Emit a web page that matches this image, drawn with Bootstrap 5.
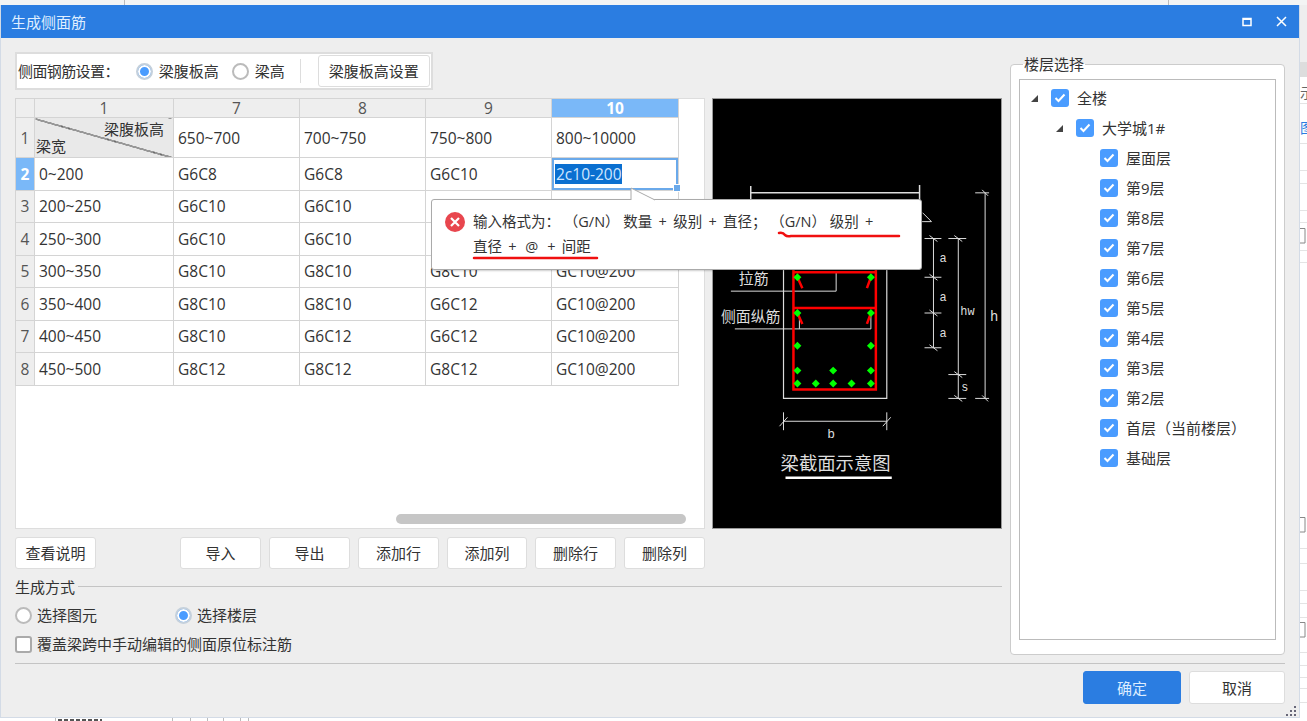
<!DOCTYPE html>
<html lang="zh">
<head>
    <meta charset="UTF-8">
    <title>生成侧面筋</title>
    <link href="https://cdn.jsdelivr.net/npm/bootstrap@5.3.0/dist/css/bootstrap.min.css" rel="stylesheet">
    <style>
        html, body { height: 721px; overflow: hidden; }
        body {
            background: #fff;
            color: #333;
            font-family: "Open Sans", "Noto Sans CJK SC", sans-serif;
            font-size: 15px;
            line-height: 20px;
        }
        /* application behind the dialog */
        .app-top { height: 5px; background: #f3f4f4; }
        .app-line { width: 1px; height: 5px; background: #bbb; }
        .app-main { height: 713px; }
        .app-side { width: 7px; background: #fff; overflow: hidden; display: block; }
        .app-side text { font-family: "Noto Sans CJK SC", sans-serif; font-size: 14px; }
        .app-bottom { height: 3px; background: #fff; display: block; }

        .dlg { width: 1300px; background: #eee; border: 1px solid #d3dbe6; border-width: 0 1px 1px 1px; }
        .dlg-title { height: 33px; background: #2b7de1; color: #dfeeff; padding: 0 12px 0 10px; }
        .dlg-body { padding: 14px 13px 0 14px; gap: 8px; }
        .left-col { width: 987px; }
        .settings { width: 418px; height: 38px; background: #fff; border: 2px solid #ddd; padding: 0 1px; }
        .lbl-main { margin-right: 17px; letter-spacing: -.6px; }
        .vsep { width: 1px; height: 24px; background: #ddd; margin: 0 17px 0 15px; }
        .ui-btn {
            background: #fff;
            border: 1px solid #ddd;
            border-radius: 3px;
            color: #333;
            font-size: 15px;
            line-height: 20px;
            padding: 0;
            height: 32px;
        }
        .btn-set { width: 112px; }
        .btn-act { width: 81px; }
        .btn-act-s { width: 80px; }
        .btn-primary-ui { width: 98px; height: 33px; background: #2b7de1; border-color: #2b7de1; color: #dcecff; }
        .btn-cancel-ui { width: 96px; height: 33px; }

        .ui-radio { width: 17px; height: 17px; border-radius: 50%; border: 2px solid #bbb; background: #fff; flex: none; }
        .ui-radio.on { box-shadow: inset 0 0 0 2px #fff; background: #4a9cff; border-color: #c4d0dc; }
        .ui-box { width: 17px; height: 17px; border: 2px solid #aaa; border-radius: 3px; background: #fff; flex: none; }

        .panes { margin-top: 8px; gap: 7px; height: 431px; }
        .grid-wrap { width: 690px; flex: none; background: #fff; border: 1px solid #ddd; }
        .sheet { table-layout: fixed; width: 664px; border-collapse: collapse; margin: -1px 0 0 -1px; }
        .sheet td, .sheet th {
            border: 1px solid #d4d4d4;
            padding: 0 0 0 4px;
            font-weight: 400;
            font-size: 15.500px;
            color: #333;
            overflow: hidden;
            white-space: nowrap;
        }
        .sheet thead th { height: 19px; background: #eee; text-align: center; padding: 0; line-height: 18px; color: #555; }
        .sheet tbody th { background: #eee; text-align: center; padding: 0; color: #555; }
        .row-1 td, .row-1 th { height: 40px; }
        .row-n td, .row-n th { height: 32.5px; }
        .sheet .hl { background: #7ab8f8; color: #fff; font-weight: 700; }
        .sheet .corner {
            background: linear-gradient(to top right, #e9e9e9 calc(50% - 1px), #444 calc(50% - 1px), #444 calc(50% + 0px), #e9e9e9 calc(50% + 0px));
            padding: 0;
            font-size: 15px;
        }
        .corner-in { height: 39px; line-height: 16px; padding: 3px 9px 3px 1px; }
        .sheet .cell-edit { position: relative; box-shadow: inset 0 0 0 2px #6aa9ea; padding-left: 3px; overflow: visible; }
        .sel-text { background: #0a6fd0; color: #cfe6ff; padding: 0 0 0 1px; display: inline-block; line-height: 20px; }
        .grip-dot { position: absolute; right: -3px; bottom: -2px; width: 6px; height: 6px; background: #6aa9ea; border: 1px solid #fff; box-sizing: content-box; }
        .thumb { width: 290px; height: 10px; margin: 0 0 4px 380px; background: #c6c6c6; border-radius: 5px; }

        .pic { width: 290px; height: 431px; flex: none; background: #000; border: 1px solid #999; display: block; }
        .pic text { fill: #ddd; font-family: "Noto Sans CJK SC", sans-serif; }
        .pic .cad { font-family: "Liberation Mono", monospace; }

        .tip {
            position: absolute;
            left: 431px;
            top: 199px;
            width: 491px;
            height: 71px;
            background: #fff;
            border: 1px solid #aaa;
            border-radius: 3px;
            padding: 9px 6px 0 41px;
            font-size: 14.500px;
            line-height: 25px;
            color: #333;
            box-shadow: 1px 1px 2px rgba(0,0,0,.2);
            z-index: 5;
        }
        .tip-arrow { position: absolute; left: 198px; top: -13px; }
        .tip-icon { position: absolute; left: 13px; top: 12px; }
        .tip-ink { position: absolute; left: 0; top: 0; pointer-events: none; }
        .sym { margin: 0 2.500px; }

        .btn-row { margin-top: 8px; width: 690px; }
        .btn-gap { gap: 8px; }
        .gen-head { margin-top: 8px; line-height: 20px; }
        .gen-line { flex: 1; height: 1px; background: #c4c4c4; margin: 0 0 2px 3px; }
        .gen-opt { margin-top: 8px; height: 20px; }
        .gen-opt2 { margin-top: 9px; height: 20px; }
        .opt-a { width: 160px; }
        .lbl-gap { gap: 5px; }

        .floors { width: 275px; height: 591px; margin-top: 12px; background: #fff; border: 1px solid #ccc; border-radius: 4px; padding: 14px 8px; position: relative; }
        .floors-legend { position: absolute; left: 12px; top: -11px; padding: 0 1px; line-height: 20px; background: linear-gradient(#eee 50%, #fff 50%); }
        .tree { height: 561px; border: 1px solid #bbb; margin: 0; padding: 3px 0 0; list-style: none; }
        .tree li { height: 30px; }
        .lv0 { padding-left: 10px; }
        .lv1 { padding-left: 35px; }
        .lv2 { padding-left: 80px; }
        .tw { width: 9px; margin-right: 12px; flex: none; }
        .ui-check { width: 18px; height: 18px; background: #4a9cff; border-radius: 3px; margin-right: 8px; flex: none; }

        .dlg-foot { margin: 8px 14px 0 14px; border-top: 1px solid #c4c4c4; padding-top: 7px; gap: 8px; position: relative; }
        .resize-grip { position: absolute; right: -12px; bottom: -13px; }
    </style>
</head>
<body>
    <div class="app-top d-flex">
        <div style="width:124px"></div><div class="app-line"></div>
        <div style="width:1043px"></div><div class="app-line"></div>
    </div>
    <div class="app-main d-flex">
        <div class="dlg d-flex flex-column">
            <div class="dlg-title d-flex align-items-center justify-content-between">
                <span>生成侧面筋</span>
                <div class="d-flex align-items-center" style="gap:24px">
                    <svg width="10" height="10" viewBox="0 0 10 10"><rect x="1" y="1.500" width="8" height="7" fill="none" stroke="#fff" stroke-width="1.500"/><path d="M1 2h8" stroke="#fff" stroke-width="2"/></svg>
                    <svg width="11" height="11" viewBox="0 0 11 11"><path d="M1 1l9 9M10 1l-9 9" stroke="#fff" stroke-width="1.500"/></svg>
                </div>
            </div>
            <div class="dlg-body d-flex">
                <div class="left-col">
                    <div class="settings d-flex align-items-center">
                        <span class="lbl-main">侧面钢筋设置：</span>
                        <span class="ui-radio on"></span><span class="ms-1" style="margin-right:13px;padding-left:2px">梁腹板高</span>
                        <span class="ui-radio"></span><span class="ms-1" style="padding-left:2px">梁高</span>
                        <span class="vsep"></span>
                        <button class="ui-btn btn-set">梁腹板高设置</button>
                    </div>
                    <div class="panes d-flex">
                        <div class="grid-wrap d-flex flex-column justify-content-between">
                            <table class="sheet">
                                <colgroup><col style="width:19px"><col style="width:139px"><col style="width:126px"><col style="width:126px"><col style="width:126px"><col style="width:127px"></colgroup>
                                <thead>
                                    <tr><th></th><th>1</th><th>7</th><th>8</th><th>9</th><th class="hl">10</th></tr>
                                </thead>
                                <tbody>
                                    <tr class="row-1"><th>1</th>
                                        <td class="corner"><div class="corner-in d-flex flex-column justify-content-between"><span class="align-self-end">梁腹板高</span><span>梁宽</span></div></td>
                                        <td>650~700</td><td>700~750</td><td>750~800</td><td>800~10000</td></tr>
                                    <tr class="row-n"><th class="hl">2</th><td>0~200</td><td>G6C8</td><td>G6C8</td><td>G6C10</td>
                                        <td class="cell-edit"><span class="sel-text">2c10-200</span><span class="grip-dot"></span></td></tr>
                                    <tr class="row-n"><th>3</th><td>200~250</td><td>G6C10</td><td>G6C10</td><td></td><td></td></tr>
                                    <tr class="row-n"><th>4</th><td>250~300</td><td>G6C10</td><td>G6C10</td><td></td><td></td></tr>
                                    <tr class="row-n"><th>5</th><td>300~350</td><td>G8C10</td><td>G8C10</td><td>G8C10</td><td>GC10@200</td></tr>
                                    <tr class="row-n"><th>6</th><td>350~400</td><td>G8C10</td><td>G8C10</td><td>G6C12</td><td>GC10@200</td></tr>
                                    <tr class="row-n"><th>7</th><td>400~450</td><td>G8C10</td><td>G6C12</td><td>G6C12</td><td>GC10@200</td></tr>
                                    <tr class="row-n"><th>8</th><td>450~500</td><td>G8C12</td><td>G8C12</td><td>G8C12</td><td>GC10@200</td></tr>
                                </tbody>
                            </table>
                            <div class="thumb"></div>
                        </div>
                        <svg class="pic" viewBox="712 98 290 431">
                            <g stroke="#ddd" fill="none" stroke-width="1">
                                <path d="M750 192H920M750 185V199M920 184V199" stroke-width="1.500"/>
                                <path d="M920 221H932L923 212"/>
                                <path d="M783 240V399H887V240" stroke-width="1.200"/>
                                <path d="M730 291H836V272M734 329H871V314M799 316V329"/>
                                <path d="M934 238V348M925 238H942M925 277H942M925 313H942M925 348H942"/>
                                <path d="M959 238V399M949 238H967M949 375H967M949 399H967"/>
                                <path d="M986 192V399M976 192H990M976 399H990"/>
                                <path d="M783 422H887M783 413V431M887 413V431M779 427l8-9M883 427l8-9"/>
                                <path d="M930 235l8 6M930 274l8 6M930 310l8 6M930 345l8 6M955 235l8 6M955 372l8 6M955 396l8 6M983 189l6 6M983 396l6 6"/>
                            </g>
                            <path d="M793 240V390H876V240M793 272H876M793 308H876M797 277L802 288M871 277L867 288M797 313L802 324M871 313L867 324" stroke="#f00" stroke-width="2.500" fill="none"/>
                            <g id="bars" fill="#0f0"></g>
                            <text x="738" y="284" font-size="15">拉筋</text>
                            <text x="720" y="322" font-size="15">侧面纵筋</text>
                            <text class="cad" x="940" y="262" font-size="12">a</text>
                            <text class="cad" x="940" y="301" font-size="12">a</text>
                            <text class="cad" x="940" y="337" font-size="12">a</text>
                            <text class="cad" x="961" y="315" font-size="12">hw</text>
                            <text class="cad" x="962" y="392" font-size="12">s</text>
                            <text class="cad" x="991" y="321" font-size="14">h</text>
                            <text class="cad" x="827" y="439" font-size="13">b</text>
                            <text x="780" y="471" font-size="18.500">梁截面示意图</text>
                            <path d="M785 479H892" stroke="#fff" stroke-width="2.500"/>
                        </svg>
                    </div>
                    <div class="btn-row d-flex justify-content-between">
                        <button class="ui-btn btn-act">查看说明</button>
                        <div class="d-flex btn-gap">
                            <button class="ui-btn btn-act">导入</button>
                            <button class="ui-btn btn-act">导出</button>
                            <button class="ui-btn btn-act">添加行</button>
                            <button class="ui-btn btn-act-s">添加列</button>
                            <button class="ui-btn btn-act">删除行</button>
                            <button class="ui-btn btn-act">删除列</button>
                        </div>
                    </div>
                    <div class="gen-head d-flex align-items-center"><span>生成方式</span><span class="gen-line"></span></div>
                    <div class="gen-opt d-flex align-items-center">
                        <div class="opt-a d-flex align-items-center lbl-gap"><span class="ui-radio"></span><span>选择图元</span></div>
                        <div class="d-flex align-items-center lbl-gap"><span class="ui-radio on"></span><span>选择楼层</span></div>
                    </div>
                    <div class="gen-opt2 d-flex align-items-center lbl-gap"><span class="ui-box"></span><span>覆盖梁跨中手动编辑的侧面原位标注筋</span></div>
                </div>
                <div class="floors">
                    <span class="floors-legend">楼层选择</span>
                    <ul class="tree" id="tree"></ul>
                </div>
            </div>
            <div class="dlg-foot d-flex justify-content-end">
                <button class="ui-btn btn-primary-ui">确定</button>
                <button class="ui-btn btn-cancel-ui">取消</button>
                <svg class="resize-grip" width="11" height="11" viewBox="0 0 11 11" fill="#667"><rect x="8" y="0" width="2" height="2"/><rect x="4" y="4" width="2" height="2"/><rect x="8" y="4" width="2" height="2"/><rect x="0" y="8" width="2" height="2"/><rect x="4" y="8" width="2" height="2"/><rect x="8" y="8" width="2" height="2"/></svg>
            </div>
        </div>
        <svg class="app-side" width="7" height="713" viewBox="1300 5 7 713">
            <rect x="1300" y="5" width="7" height="57" fill="#eee"/>
            <rect x="1300" y="62" width="7" height="15" fill="#ddd"/>
            <text x="1300" y="98" fill="#666">示</text>
            <text x="1300" y="133" fill="#2b7de1">图</text>
            <path d="M1300 103.500H1307M1300 143.500H1307M1300 170.500H1307M1300 183.500H1307M1300 210.500H1307M1300 222.500H1307M1300 250.500H1307M1300 262.500H1307M1300 548.500H1307M1300 563.500H1307M1300 590.500H1307M1300 603.500H1307M1300 617.500H1307M1300 652.500H1307M1300 665.500H1307M1300 677.500H1307M1300 688.500H1307M1300 702.500H1307" stroke="#e4e4e4"/>
            <path d="M1300 228.500H1305V243H1300M1300 517.500H1305V532H1300M1300 622.500H1305V637H1300" fill="#fff" stroke="#888"/>
        </svg>
    </div>
    <svg class="app-bottom" width="1307" height="3" viewBox="0 718 1307 3">
        <path d="M58 720H102" stroke="#555" stroke-width="2" stroke-dasharray="4 2"/>
        <path d="M55.500 718V721M172.500 718V721M190.500 718V721M207.500 718V721M223.500 718V721M240.500 718V721M248.500 718V721" stroke="#bbb"/>
    </svg>

    <div class="tip">
        <svg class="tip-arrow" width="26" height="14" viewBox="0 0 26 14"><path d="M1 14V1L25 13V14Z" fill="#fff"/><path d="M1 13V1L25 13" fill="none" stroke="#aaa"/></svg>
        <svg class="tip-icon" width="20" height="20" viewBox="0 0 20 20"><circle cx="10" cy="10" r="10" fill="#e8464e"/><path d="M6 6l8 8M14 6l-8 8" stroke="#fff" stroke-width="2.200"/></svg>
        输入格式为： （G/N） 数量 <span class="sym">+</span> 级别 <span class="sym">+</span> 直径； （G/N） 级别 <span class="sym">+</span><br>直径 <span class="sym">+</span> <span class="sym">@</span> <span class="sym">+</span> 间距
        <svg class="tip-ink" width="489" height="69" viewBox="432 200 489 69"><path d="M779 233q4-1 6 2 2 2 6 1H899M474 258H597" fill="none" stroke="#f01010" stroke-width="2.500" stroke-linecap="round"/></svg>
    </div>

    <script>
        const floors = ["屋面层", "第9层", "第8层", "第7层", "第6层", "第5层", "第4层", "第3层", "第2层", "首层（当前楼层）", "基础层"];
        const check = '<span class="ui-check d-flex align-items-center justify-content-center"><svg width="12" height="10" viewBox="0 0 12 10"><path d="M1.500 5l3 3 6-6.500" fill="none" stroke="#fff" stroke-width="2"/></svg></span>';
        const twist = '<svg class="tw" width="9" height="9" viewBox="0 0 9 9"><path d="M8 1V8H1Z" fill="#444"/></svg>';
        const treeEl = document.getElementById("tree");
        function addRow(level, open, name) {
            const li = document.createElement("li");
            li.className = "d-flex align-items-center lv" + level;
            li.innerHTML = (open ? twist : "") + check + "<span>" + name + "</span>";
            treeEl.appendChild(li);
        }
        addRow(0, true, "全楼");
        addRow(1, true, "大学城1#");
        floors.forEach(f => addRow(2, false, f));

        // green longitudinal bars in the beam section
        const bars = [[797,277],[871,277],[797,313],[871,313],[797,346],[871,346],[797,371],[833,371],[871,371],[797,384],[815.5,384],[833,384],[851.5,384],[871,384]];
        document.getElementById("bars").innerHTML = bars.map(b => `<path d="M${b[0]} ${b[1]-4}l4 4-4 4-4-4z"/>`).join("");
    </script>
    <script src="https://cdn.jsdelivr.net/npm/bootstrap@5.3.0/dist/js/bootstrap.bundle.min.js"></script>
</body>
</html>
